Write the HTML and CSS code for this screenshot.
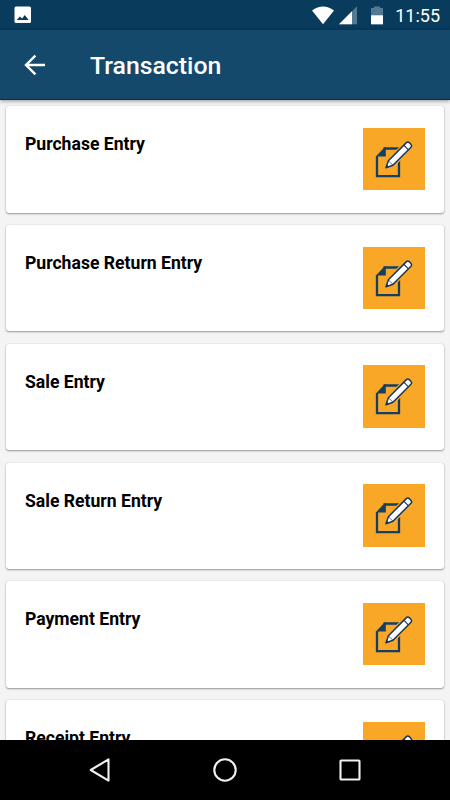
FILE: index.html
```html
<!DOCTYPE html>
<html lang="en">
<head>
<meta charset="utf-8">
<title>Transaction</title>
<link rel="stylesheet" href="styles.css">
</head>
<body>
<svg class="defs" width="0" height="0">
  <symbol id="edit" viewBox="0 0 62.5 62.5">
    <path d="M20.5 20.5H36V48.2H14V28" fill="none" stroke="#143f63" stroke-width="2.3"/>
    <path d="M12.9 28.4L21.4 19.4H22.8V28.4Z" fill="#143f63"/>
    <path d="M23 39.7L25.4 32.8L43.4 14.6Q44.8 13.2 46.2 14.6L48 16.5Q49.3 17.9 48 19.2L30 37.2Z" fill="#f9a726" stroke="#f9a726" stroke-width="4"/>
    <path d="M23 39.7L25.4 32.8L43.4 14.6Q44.8 13.2 46.2 14.6L48 16.5Q49.3 17.9 48 19.2L30 37.2Z" fill="#fff" stroke="#17365c" stroke-width="1.5" stroke-linejoin="round"/>
    <path d="M40.8 17.2L45.4 21.8" fill="none" stroke="#17365c" stroke-width="1.2"/>
    <path d="M25.4 32.8L30 37.2" fill="none" stroke="#17365c" stroke-width=".7"/>
    <path d="M22.7 40L23.9 36.8L25.9 38.8Z" fill="#17365c"/>
  </symbol>
</svg>
<div class="screen">
  <header class="status">
    <svg class="photo" viewBox="0 0 18 18"><rect x=".5" y=".5" width="16.5" height="16.5" rx="1.5" fill="#fff"/><path d="M2.8 14L5.8 10.4L8.2 12.6L10.8 9L14.6 14Z" fill="#083b5c"/></svg>
    <svg class="indicators" viewBox="0 0 74 20">
      <path d="M0 4.4Q11 -3.5 22 4.4L11 18.2Z" fill="#fff"/>
      <path d="M27 18.3L45 .3V18.3Z" fill="#547a92"/>
      <path d="M27 18.3L40 5.3V18.3Z" fill="#fff"/>
      <path d="M59 2H62V.5H68V2H71V18.3H59Z" fill="#547a92"/>
      <path d="M59 9.3H71V18.3H59Z" fill="#fff"/>
    </svg>
    <span class="clock">11:55</span>
  </header>
  <div class="toolbar">
    <svg class="back" viewBox="0 0 22 22"><path d="M21 11H2M11.4 1.6L2 11L11.4 20.4" fill="none" stroke="#fff" stroke-width="2.4"/></svg>
    <h1>Transaction</h1>
  </div>
  <main class="list">
    <section class="card"><h2>Purchase Entry</h2><svg class="tile"><use href="#edit"/></svg></section>
    <section class="card"><h2>Purchase Return Entry</h2><svg class="tile"><use href="#edit"/></svg></section>
    <section class="card"><h2>Sale Entry</h2><svg class="tile"><use href="#edit"/></svg></section>
    <section class="card"><h2>Sale Return Entry</h2><svg class="tile"><use href="#edit"/></svg></section>
    <section class="card"><h2>Payment Entry</h2><svg class="tile"><use href="#edit"/></svg></section>
    <section class="card"><h2>Receipt Entry</h2><svg class="tile"><use href="#edit"/></svg></section>
  </main>
  <nav class="navbar">
    <svg viewBox="0 0 26 26"><path d="M3.7 13L21.5 2.4V23.6Z"/></svg>
    <svg viewBox="0 0 26 26"><circle cx="13" cy="13" r="10.7"/></svg>
    <svg viewBox="0 0 26 26"><rect x="3.5" y="3.5" width="19" height="19" rx=".8"/></svg>
  </nav>
</div>
</body>
</html>
```

FILE: styles.css
```css
* { box-sizing: border-box; }
body { margin: 0; font-family: Roboto, "Liberation Sans", sans-serif; }
h1, h2 { margin: 0; }
svg { display: block; flex: none; }
.defs { position: absolute; }
.screen {
  width: 450px;
  height: 800px;
  display: flex;
  flex-direction: column;
  overflow: hidden;
  background: #f4f4f4;
}
.status {
  flex: none;
  height: 30px;
  display: flex;
  align-items: flex-start;
  padding: 6px 10px 0 14px;
  background: #083b5c;
  color: #fff;
}
.photo { width: 18px; height: 18px; }
.indicators { width: 74px; height: 20px; margin-left: auto; }
.clock {
  width: 54px;
  font-size: 18px;
  line-height: 20px;
  text-align: right;
}
.toolbar {
  flex: none;
  height: 70px;
  display: flex;
  align-items: center;
  padding-left: 24px;
  background: #14496c;
  color: #fff;
  border-bottom: 1px solid #062b5c;
  box-shadow: 0 1px 4px rgba(0, 0, 0, .4);
  z-index: 1;
}
.back { width: 22px; height: 22px; }
.toolbar h1 {
  margin: 2.6px 0 0 44px;
  font-size: 24.8px;
  font-weight: 500;
  line-height: 30px;
}
.list {
  flex: 1;
  min-height: 0;
  overflow: hidden;
  display: flex;
  flex-direction: column;
  gap: 12.5px;
  padding: 6.3px 6.3px 0;
}
.card {
  flex: none;
  height: 106.25px;
  display: flex;
  justify-content: space-between;
  align-items: flex-start;
  padding: 21.5px 18.7px 0;
  border-radius: 3px;
  background: #fff;
  box-shadow: 0 1px 2px rgba(0, 0, 0, .38), 0 0 1px rgba(0, 0, 0, .2);
}
.card h2 {
  margin-top: 6.6px;
  color: #000;
  font-size: 17.6px;
  font-weight: 700;
  line-height: 21px;
}
.tile { width: 62.5px; height: 62.5px; background: #f9a726; }
.navbar {
  flex: none;
  height: 60px;
  display: flex;
  justify-content: center;
  align-items: center;
  gap: 99px;
  background: #000;
}
.navbar svg {
  width: 26px;
  height: 26px;
  fill: none;
  stroke: #f0f0f0;
  stroke-width: 2.1;
  stroke-linejoin: round;
}
```
